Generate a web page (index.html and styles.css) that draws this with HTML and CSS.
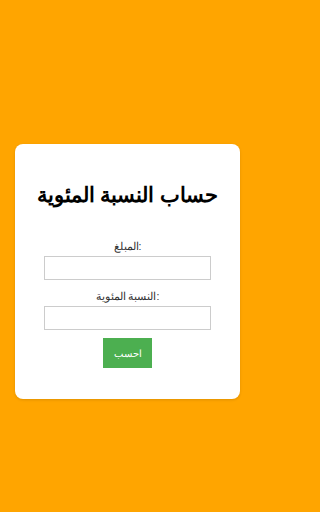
FILE: index.html
```html
<!DOCTYPE html>
<html lang="ar">
<head>
<meta charset="utf-8">
<title>حساب النسبة المئوية</title>
<link rel="stylesheet" href="styles.css">
</head>
<body>
<main class="page">
  <section class="card">
    <h1 class="title">حساب النسبة المئوية</h1>
    <label class="label" for="amount">المبلغ:</label>
    <input class="field" id="amount" type="text">
    <label class="label label-second" for="percent">النسبة المئوية:</label>
    <input class="field" id="percent" type="text">
    <button class="btn" type="button">احسب</button>
  </section>
</main>
</body>
</html>
```
FILE: styles.css
```css
html {
  background: #FFA500;
}
body {
  margin: 0;
  padding: 0;
  background: #FFA500;
  width: 255px;
  font-family: Arial, sans-serif;
}
.page {
  box-sizing: border-box;
  height: 512px;
  padding: 144px 15px 0 15px;
}
.card {
  background: #fff;
  border-radius: 8px;
  box-shadow: 0 1px 3px rgba(0, 0, 0, 0.12);
  box-sizing: border-box;
  height: 255px;
  padding: 20px;
  display: flex;
  flex-direction: column;
  align-items: center;
  text-align: center;
}
.title {
  margin: 17px 0 0 0;
  font-size: 21.4px;
  line-height: 28px;
  font-weight: bold;
  color: #000;
  white-space: nowrap;
}
.label {
  margin-top: 30px;
  font-size: 10.5px;
  line-height: 14px;
  color: #333;
}
.label-second {
  margin-top: 9px;
}
.field {
  box-sizing: border-box;
  width: 167px;
  height: 24px;
  margin-top: 3px;
  border: 1px solid #ccc;
  background: #fff;
  padding: 0 4px;
}
.btn {
  margin-top: 8px;
  width: 49px;
  height: 30px;
  border: none;
  background: #4CAF50;
  color: #fff;
  font-family: Arial, sans-serif;
  font-size: 9.5px;
  padding: 0;
}
```
